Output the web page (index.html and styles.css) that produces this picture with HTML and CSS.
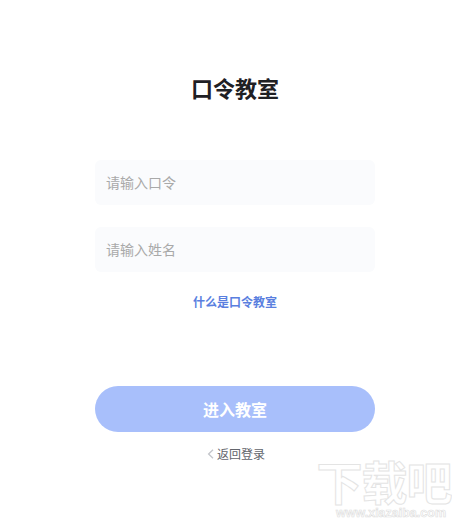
FILE: index.html
```html
<!DOCTYPE html>
<html lang="zh">
<head>
<meta charset="utf-8">
<title>口令教室</title>
<link rel="stylesheet" href="styles.css">
</head>
<body>
<main class="panel">
  <h1 class="title">口令教室</h1>
  <form class="form">
    <input class="field" type="text" placeholder="请输入口令">
    <input class="field" type="text" placeholder="请输入姓名">
    <a class="help" href="#">什么是口令教室</a>
    <button class="submit" type="button">进入教室</button>
    <a class="back" href="#">
      <svg class="chevron" width="7" height="10" viewBox="0 0 7 10"><path d="M6 .8 1.6 5 6 9.2" fill="none" stroke="#c4c6cb" stroke-width="1.3"/></svg>
      <span>返回登录</span>
    </a>
  </form>
</main>
<div class="watermark">
  <div class="wm-logo">下载吧</div>
  <div class="wm-url">www.xiazaiba.com</div>
</div>
</body>
</html>
```
FILE: styles.css
```css
html, body {
  margin: 0;
  height: 520px;
  overflow: hidden;
  background: #fff;
}
body {
  position: relative;
  font-family: "Noto Sans CJK SC", "Noto Sans", sans-serif;
}
.panel {
  width: 280px;
  margin-left: 95px;
  padding-top: 71px;
}
.title {
  margin: 0;
  font-size: 22px;
  line-height: 32px;
  font-weight: 700;
  color: #1f2024;
  text-align: center;
}
.form {
  display: flex;
  flex-direction: column;
  align-items: center;
  margin-top: 57px;
}
.field {
  box-sizing: border-box;
  width: 100%;
  height: 45px;
  margin-bottom: 22px;
  padding: 0 12px 2px 11px;
  border: 0;
  border-radius: 6px;
  background: #fafbfd;
  font: 14px "Noto Sans CJK SC", sans-serif;
}
.field::placeholder {
  color: #a9a9a9;
  opacity: 1;
}
.help {
  margin-top: -1px;
  font-size: 12px;
  line-height: 18px;
  font-weight: 700;
  color: #5a7fdf;
  text-decoration: none;
}
.submit {
  width: 100%;
  height: 46px;
  margin-top: 75px;
  border: 0;
  border-radius: 23px;
  background: #a8bffb;
  color: #fff;
  font: 700 16px "Noto Sans CJK SC", sans-serif;
}
.back {
  display: flex;
  align-items: center;
  gap: 3px;
  margin-top: 13px;
  margin-left: 2px;
  font-size: 12px;
  line-height: 18px;
  color: #62656c;
  text-decoration: none;
}
.chevron {
  display: block;
}
.watermark {
  position: absolute;
  left: 316px;
  top: 456px;
  width: 136px;
  text-align: center;
}
.wm-logo {
  font-size: 46px;
  line-height: 48px;
  font-weight: 700;
  letter-spacing: -1px;
  white-space: nowrap;
  color: #fff;
  -webkit-text-stroke: 1px #e4e4e4;
}
.wm-url {
  margin-top: 3px;
  padding-left: 14px;
  font: 700 12.5px/12px "Liberation Sans", sans-serif;
  white-space: nowrap;
  color: #fff;
  -webkit-text-stroke: .6px #dcdcdc;
}
```
